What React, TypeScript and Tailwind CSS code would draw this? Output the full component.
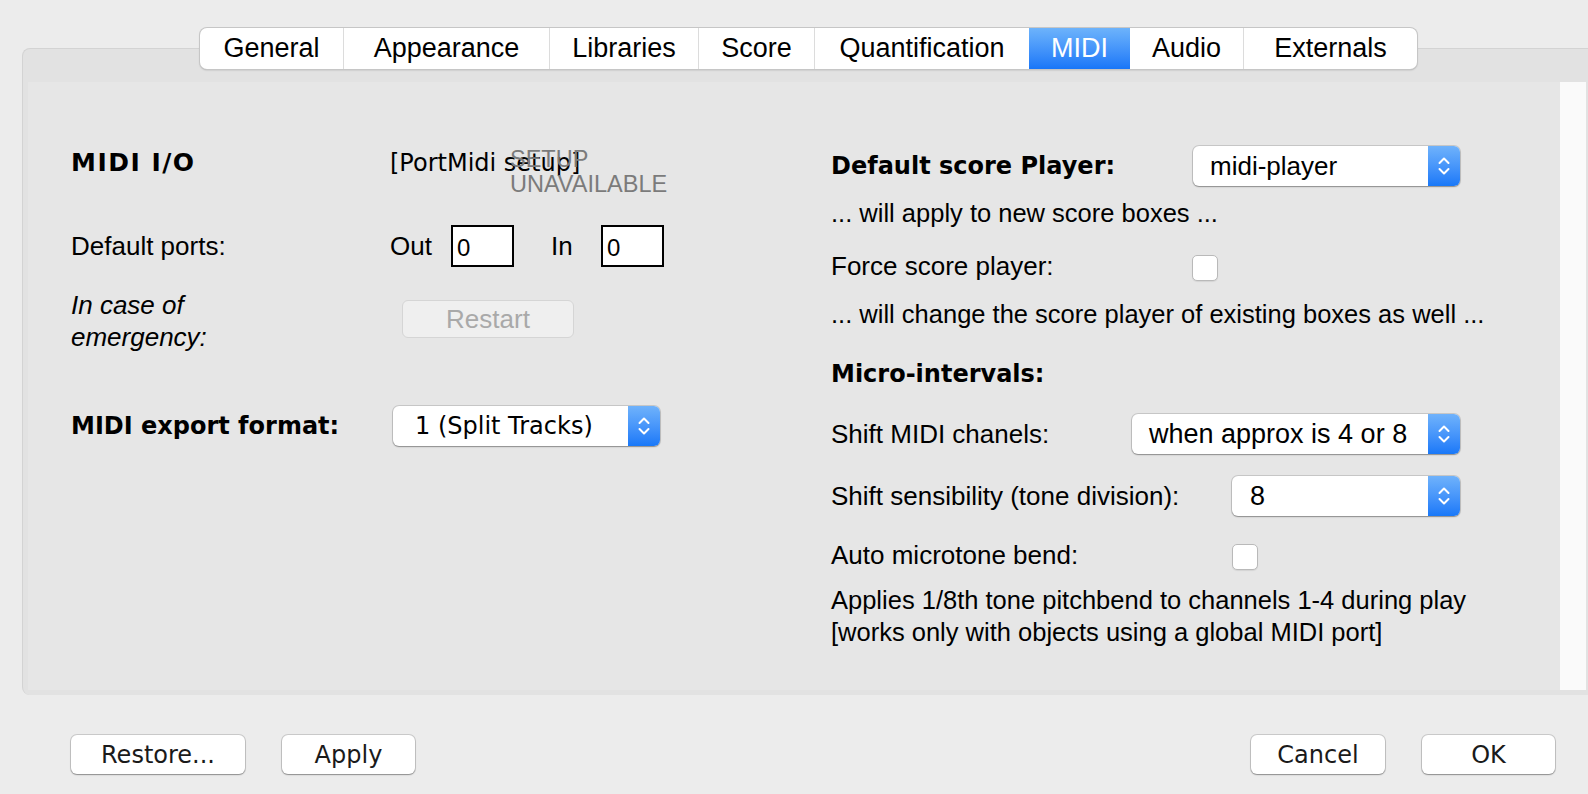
import React from "react";

const sans = "font-['Liberation_Sans',Arial,sans-serif]";
const verd = "font-['DejaVu_Sans',Verdana,sans-serif]";

const tabs = [
  { label: "General", w: "w-[143px]" },
  { label: "Appearance", w: "w-[206px]" },
  { label: "Libraries", w: "w-[149px]" },
  { label: "Score", w: "w-[116px]" },
  { label: "Quantification", w: "w-[215px]" },
  { label: "MIDI", w: "w-[101px]", active: true },
  { label: "Audio", w: "w-[113px]" },
  { label: "Externals", w: "w-[174px]" },
];

function Chevrons() {
  return (
    <svg width="16" height="26" viewBox="0 0 16 26" fill="none" stroke="white" strokeWidth="2" strokeLinecap="round" strokeLinejoin="round">
      <path d="M3.5 10 L8 5.5 L12.5 10" />
      <path d="M3.5 16 L8 20.5 L12.5 16" />
    </svg>
  );
}

function Select({ value, className, font }: { value: string; className: string; font: string }) {
  return (
    <div className={`flex h-[40px] rounded-[6px] bg-white shadow-[0_0_0_1px_rgba(0,0,0,0.13),0_1px_1.5px_rgba(0,0,0,0.3)] ${className}`}>
      <div className={`flex flex-1 items-center text-black ${font}`}>{value}</div>
      <div className="flex w-[32px] items-center justify-center rounded-r-[6px] bg-gradient-to-b from-[#6fb2fb] to-[#1878f8]">
        <Chevrons />
      </div>
    </div>
  );
}

function Checkbox() {
  return <div className="mt-[5px] h-[26px] w-[26px] rounded-[5px] border border-[#b9b9b9] bg-white shadow-[0_1px_1px_rgba(0,0,0,0.08)]" />;
}

function Button({ label, className }: { label: string; className: string }) {
  return (
    <button className={`flex h-[39px] items-center justify-center rounded-[6px] bg-white text-[24px] text-[#1a1a1a] shadow-[0_0_0_1px_rgba(0,0,0,0.14),0_1px_1.5px_rgba(0,0,0,0.3)] ${verd} ${className}`}>
      {label}
    </button>
  );
}

function PortBox() {
  return (
    <div className={`flex h-[42px] w-[63px] items-end border-2 border-black bg-white pb-[5px] pl-[4px] text-[24px] leading-none ${sans}`}>0</div>
  );
}

export default function App() {
  return (
    <div className={`h-[794px] w-[1588px] overflow-hidden bg-[#ececec] pt-[28px] text-black ${sans}`}>
      {/* Tab bar */}
      <div className="relative z-10 ml-[200px] flex h-[41px] w-fit overflow-hidden rounded-[7px] bg-white shadow-[0_0_0_1px_#c6c6c6,0_1px_2px_rgba(0,0,0,0.28)]">
        {tabs.map((t, i) => (
          <div
            key={t.label}
            className={`flex items-center justify-center text-[27px] ${t.w} ${i > 0 && !t.active && !tabs[i - 1].active ? "border-l border-[#dcdcdc]" : ""} ${
              t.active ? "bg-gradient-to-b from-[#6db3fb] to-[#1776f8] text-white" : "text-black"
            }`}
          >
            {t.label}
          </div>
        ))}
      </div>

      {/* Panel */}
      <div className="mt-[-21px] ml-[22px] rounded-l-[8px] border-t border-l border-[#d3d3d3] bg-[#e2e2e2] pt-[33px] pb-[5px] pl-[5px] pr-[2px]">
        <div className="flex h-[608px]">
          <div className="flex flex-1 bg-[#e6e6e6] pl-[43px]">
            {/* Left column */}
            <div className="flex w-[760px] flex-col">
              <div className="mt-[65px] flex h-[32px] items-center">
                <div className={`w-[319px] text-[25px] font-bold tracking-[1.5px] ${verd}`}>MIDI I/O</div>
                <div className={`relative text-[24px] ${verd}`}>
                  [PortMidi setup]
                  <div className={`absolute top-[2px] left-[120px] text-[23.5px] leading-[25px] whitespace-nowrap text-[#7b7b7b] ${sans}`}>
                    SETUP
                    <br />
                    UNAVAILABLE
                  </div>
                </div>
              </div>

              <div className="mt-[46px] flex h-[42px] items-center text-[26px]">
                <div className="w-[319px]">Default ports:</div>
                <div className="w-[61px]">Out</div>
                <PortBox />
                <div className="ml-[37px] w-[50px]">In</div>
                <PortBox />
              </div>

              <div className="mt-[22px] flex items-start">
                <div className="w-[331px] text-[26px] leading-[32px] italic">
                  In case of
                  <br />
                  emergency:
                </div>
                <button className="mt-[11px] flex h-[38px] w-[172px] items-center justify-center rounded-[6px] border border-[#d5d5d5] bg-[#efefef] text-[26px] text-[#a9a9a9]">
                  Restart
                </button>
              </div>

              <div className="mt-[53px] flex h-[40px] items-center">
                <div className={`w-[322px] text-[24px] font-bold ${verd}`}>MIDI export format:</div>
                <Select value="1 (Split Tracks)" className="w-[267px]" font={`pl-[22px] text-[24px] ${verd}`} />
              </div>
            </div>

            {/* Right column */}
            <div className="flex flex-1 flex-col text-[26px]">
              <div className="mt-[64px] flex h-[40px] items-center">
                <div className={`w-[362px] text-[24px] font-bold ${verd}`}>Default score Player:</div>
                <Select value="midi-player" className="w-[267px]" font="pl-[17px] text-[26px]" />
              </div>
              <div className="mt-[11px] flex h-[32px] items-center text-[25.5px]">... will apply to new score boxes ...</div>
              <div className="mt-[21px] flex h-[32px] items-start">
                <div className="w-[361px] leading-[32px]">Force score player:</div>
                <Checkbox />
              </div>
              <div className="mt-[16px] flex h-[32px] items-center text-[25.5px]">... will change the score player of existing boxes as well ...</div>
              <div className={`mt-[28px] flex h-[32px] items-center text-[24px] font-bold ${verd}`}>Micro-intervals:</div>
              <div className="mt-[24px] flex h-[40px] items-center">
                <div className="w-[301px]">Shift MIDI chanels:</div>
                <Select value="when approx is 4 or 8" className="w-[328px]" font="pl-[17px] text-[27px]" />
              </div>
              <div className="mt-[22px] flex h-[40px] items-center">
                <div className="w-[401px]">Shift sensibility (tone division):</div>
                <Select value="8" className="w-[228px]" font="pl-[18px] text-[27px]" />
              </div>
              <div className="mt-[23px] flex h-[32px] items-start">
                <div className="w-[401px] leading-[32px]">Auto microtone bend:</div>
                <Checkbox />
              </div>
              <div className="mt-[13px] flex h-[32px] items-center text-[25.5px]">Applies 1/8th tone pitchbend to channels 1-4 during play</div>
              <div className="flex h-[32px] items-center text-[25.5px]">[works only with objects using a global MIDI port]</div>
            </div>
          </div>
          <div className="w-[26px] bg-[#fafafa]" />
        </div>
      </div>

      {/* Bottom buttons */}
      <div className="mt-[40px] flex pr-[33px] pl-[71px]">
        <Button label="Restore..." className="w-[174px]" />
        <Button label="Apply" className="ml-[37px] w-[133px]" />
        <div className="flex-1" />
        <Button label="Cancel" className="w-[134px]" />
        <Button label="OK" className="ml-[37px] w-[133px]" />
      </div>
    </div>
  );
}
